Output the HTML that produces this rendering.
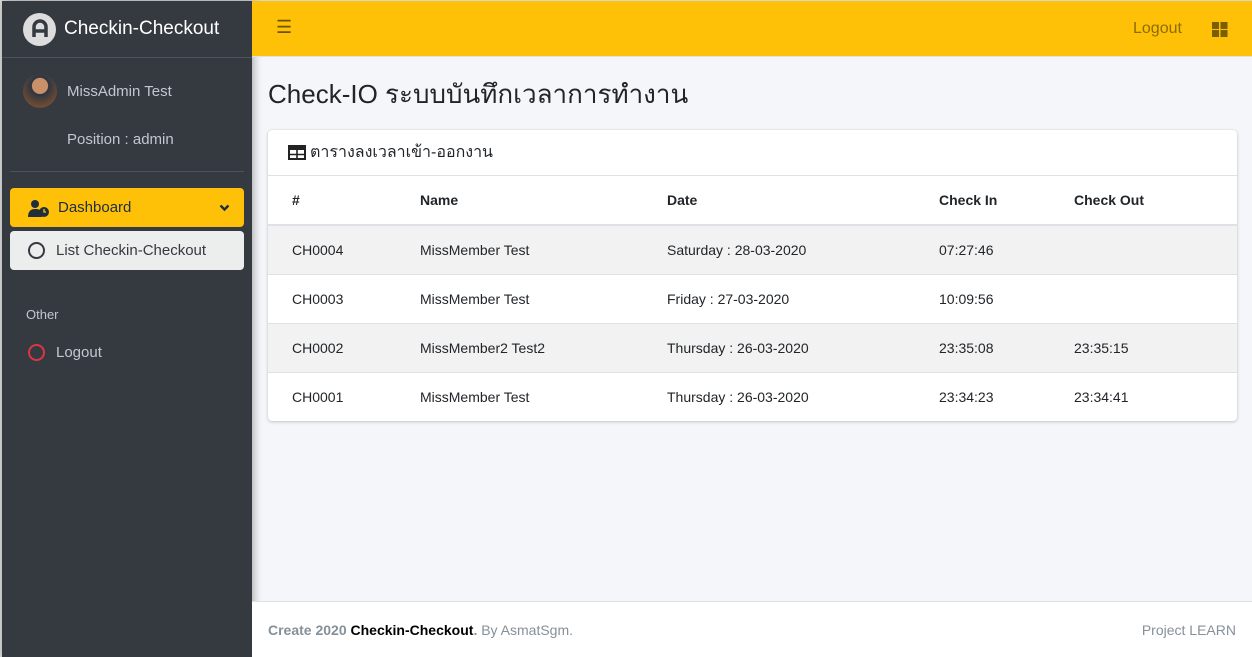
<!DOCTYPE html><html><head><meta charset="utf-8"><style>
*{box-sizing:border-box;margin:0;padding:0}
body{width:1252px;height:657px;overflow:hidden;background:#f4f6f9;font-family:"Liberation Sans","Noto Sans CJK SC",sans-serif;font-size:14px;color:#212529;position:relative}
.bl{position:absolute;left:0;top:0;width:2px;height:657px;background:#d6d6d6}
.bt{position:absolute;left:0;top:0;width:1252px;height:1px;background:#d6d6d6}
.sb{position:absolute;left:2px;top:1px;width:250px;height:656px;background:#343a40;box-shadow:2px 0 8px rgba(0,0,0,.3)}
.brand{height:57px;border-bottom:1px solid #4b545c;display:flex;align-items:center;padding-left:21px;color:#fff;font-size:19px}
.logo{width:33px;height:33px;border-radius:50%;background:#ddd;margin-right:8px;display:flex;align-items:center;justify-content:center}
.user{position:relative;height:114px;border-bottom:1px solid #4b545c;margin:0 8px;color:#c2c7d0;font-size:15px}
.av{position:absolute;left:13px;top:16px;width:34px;height:34px;border-radius:50%;background:radial-gradient(circle at 50% 35%,#c9906a 0 28%,#2c3542 30%,#6b4a36 70%)}
.nav{padding:16px 8px}
.item{height:39px;border-radius:4px;display:flex;align-items:center;padding-left:18px;font-size:15px;margin-bottom:4px}
.nt{color:#c2c7d0;font-size:13px;padding:33px 16px 11px}
.top{position:absolute;left:252px;top:1px;right:0;height:56px;background:#ffc107;border-bottom:1px solid #dee2e6}
h1{position:absolute;left:268px;top:74px;font-size:26px;font-weight:400}
.card{position:absolute;left:268px;top:130px;width:969px;background:#fff;border-radius:4px;box-shadow:0 0 1px rgba(0,0,0,.13),0 1px 3px rgba(0,0,0,.2)}
.ch{height:46px;border-bottom:1px solid #dee2e6;display:flex;align-items:center;padding-left:20px;font-size:16px}
table{border-collapse:collapse;width:100%}
td,th{text-align:left;padding:0 0 0 24px;height:49px;font-size:14px;border-top:1px solid #dee2e6}
th{border-top:0;border-bottom:2px solid #dee2e6;height:49px}
tr.o td{background:#f2f2f2}
.ft{position:absolute;left:252px;right:0;top:601px;height:56px;background:#fff;border-top:1px solid #dee2e6;display:flex;align-items:center;justify-content:space-between;padding:0 16px;color:#869099;font-size:14px}
</style></head><body>
<div class="bl"></div><div class="bt"></div>
<div class="sb">
<div class="brand"><div class="logo"><svg width="20" height="20" viewBox="0 0 20 20"><path d="M4 18V8a6 6 0 0112 0v10M4 12h12" stroke="#343a40" stroke-width="3.5" fill="none"/></svg></div>Checkin-Checkout</div>
<div class="user"><div class="av"></div><div style="position:absolute;left:57px;top:25px">MissAdmin Test</div><div style="position:absolute;left:57px;top:73px">Position : admin</div></div>
<div class="nav">
<div class="item" style="background:#ffc107;color:#1f2d3d;margin-top:0"><svg width="22" height="18" viewBox="0 0 22 18" style="margin-right:8px"><circle cx="7" cy="5" r="4" fill="#1f2d3d"/><path d="M0 18c0-6 3-8 7-8s6 1 7 3v5z" fill="#1f2d3d"/><circle cx="16" cy="13" r="5" fill="#1f2d3d"/><path d="M16 10v3h2" stroke="#ffc107" stroke-width="1.3" fill="none"/></svg>Dashboard<svg style="margin-left:auto;margin-right:14px" width="11" height="8" viewBox="0 0 11 8"><path d="M1.5 1.5l4 4 4-4" stroke="#1f2d3d" stroke-width="2.4" fill="none"/></svg></div>
<div class="item" style="background:#eceded;color:#343a40"><span style="width:17px;height:17px;border:2px solid #343a40;border-radius:50%;margin-right:11px"></span>List Checkin-Checkout</div>
<div class="nt">Other</div>
<div class="item" style="color:#c2c7d0"><span style="width:17px;height:17px;border:2px solid #dc3545;border-radius:50%;margin-right:11px"></span>Logout</div>
</div></div>
<div class="top"><span style="position:absolute;left:24px;top:16px;font-size:18px;color:#6b5400">&#9776;</span><span style="position:absolute;left:881px;top:19px;font-size:16px;color:#8a6d00">Logout</span>
<svg style="position:absolute;left:960px;top:21px" width="16" height="15"><rect width="7" height="7" fill="#7a5f00"/><rect x="8.5" width="7" height="7" fill="#7a5f00"/><rect y="8" width="7" height="7" fill="#7a5f00"/><rect x="8.5" y="8" width="7" height="7" fill="#7a5f00"/></svg></div>
<h1>Check-IO ระบบบันทึกเวลาการทำงาน</h1>
<div class="card"><div class="ch"><svg width="18" height="15" style="margin-right:4px"><rect x="1" y="1" width="16" height="13" fill="none" stroke="#222" stroke-width="2"/><rect x="1" y="1" width="16" height="4" fill="#222"/><path d="M9 5v9M1 9.5h16" stroke="#222" stroke-width="1.6"/></svg>ตารางลงเวลาเข้า-ออกงาน</div>
<table><tr><th style="width:128px">#</th><th style="width:247px">Name</th><th style="width:272px">Date</th><th style="width:135px">Check In</th><th>Check Out</th></tr>
<tr class="o"><td>CH0004</td><td>MissMember Test</td><td>Saturday : 28-03-2020</td><td>07:27:46</td><td></td></tr>
<tr><td>CH0003</td><td>MissMember Test</td><td>Friday : 27-03-2020</td><td>10:09:56</td><td></td></tr>
<tr class="o"><td>CH0002</td><td>MissMember2 Test2</td><td>Thursday : 26-03-2020</td><td>23:35:08</td><td>23:35:15</td></tr>
<tr><td>CH0001</td><td>MissMember Test</td><td>Thursday : 26-03-2020</td><td>23:34:23</td><td>23:34:41</td></tr></table></div>
<div class="ft"><span><b>Create 2020 <span style="color:#000">Checkin-Checkout</span>.</b> By AsmatSgm.</span><span>Project LEARN</span></div>
</body></html>
